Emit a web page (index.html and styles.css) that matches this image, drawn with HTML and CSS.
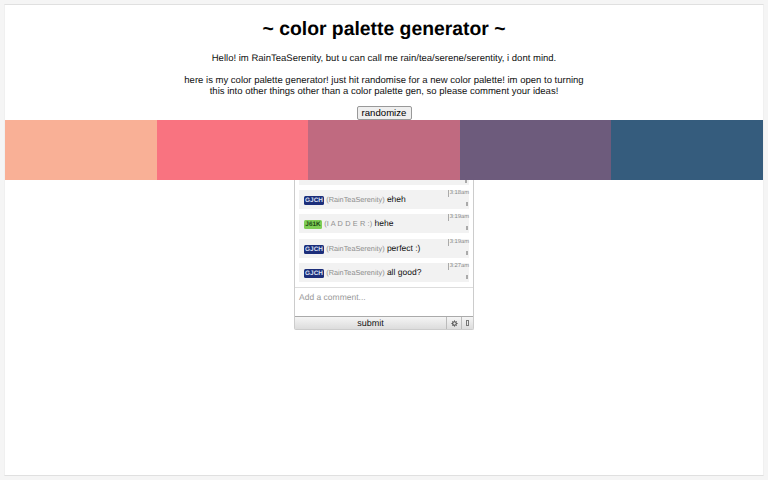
FILE: index.html
```html
<!DOCTYPE html>
<html lang="en">
<head>
<meta charset="utf-8">
<title>color palette generator</title>
<link rel="stylesheet" href="styles.css">
</head>
<body>
<main class="page">
  <header class="intro">
    <h1 class="title">~ color palette generator ~</h1>
    <p class="para first">Hello! im RainTeaSerenity, but u can call me rain/tea/serene/serentity, i dont mind.</p>
    <p class="para second">here is my color palette generator! just hit randomise for a new color palette! im open to turning<br>this into other things other than a color palette gen, so please comment your ideas!</p>
    <button class="randomize" type="button">randomize</button>
  </header>
  <section class="palette">
    <div class="swatch s1"></div>
    <div class="swatch s2"></div>
    <div class="swatch s3"></div>
    <div class="swatch s4"></div>
    <div class="swatch s5"></div>
  </section>
  <section class="chat">
    <div class="messages">
      <div class="peek"><span class="mark"></span></div>
      <div class="msg">
        <div class="body"><span class="badge blue">GJCH</span> <span class="name">(RainTeaSerenity)</span> <span class="text">eheh</span></div>
        <div class="meta"><span class="time">3:18am</span><span class="mark"></span></div>
      </div>
      <div class="msg">
        <div class="body"><span class="badge green">J61K</span> <span class="name spaced">(I A D D E R :)</span> <span class="text">hehe</span></div>
        <div class="meta"><span class="time">3:19am</span><span class="mark"></span></div>
      </div>
      <div class="msg">
        <div class="body"><span class="badge blue">GJCH</span> <span class="name">(RainTeaSerenity)</span> <span class="text">perfect :)</span></div>
        <div class="meta"><span class="time">3:19am</span><span class="mark"></span></div>
      </div>
      <div class="msg">
        <div class="body"><span class="badge blue">GJCH</span> <span class="name">(RainTeaSerenity)</span> <span class="text">all good?</span></div>
        <div class="meta"><span class="time">3:27am</span><span class="mark"></span></div>
      </div>
    </div>
    <div class="comment">Add a comment...</div>
    <div class="actions">
      <div class="submit">submit</div>
      <div class="iconbtn">
        <svg class="gear" viewBox="0 0 8 8" width="7" height="7" aria-hidden="true"><circle cx="4" cy="4" r="2.1" fill="none" stroke="#444" stroke-width="1.2"/><path d="M4 .4v1.2M4 6.4v1.2M.4 4h1.2M6.4 4h1.2M1.5 1.5l.8.8M5.7 5.7l.8.8M6.5 1.5l-.8.8M2.3 5.7l-.8.8" stroke="#444" stroke-width=".9"/></svg>
      </div>
      <div class="iconbtn narrow"><span class="tofu"></span></div>
    </div>
  </section>
</main>
</body>
</html>
```
FILE: styles.css
```css
* { box-sizing: border-box; }
html, body { margin: 0; height: 100%; }
body {
  background: #f5f5f5;
  padding: 4px;
  font-family: "Liberation Sans", Arial, sans-serif;
  color: #000;
  text-rendering: geometricPrecision;
}
.page {
  height: 472px;
  background: #fff;
  border: 1px solid #e0e0e0;
  border-left-color: #f0f0f0;
  border-right-color: #f0f0f0;
}
.intro { text-align: center; height: 115px; }
.title {
  margin: 0;
  padding-top: 13px;
  font-size: 19.35px;
  line-height: 22px;
  font-weight: 700;
}
.para { margin: 0; font-size: 9.53px; line-height: 11px; color: #111; }
.first { padding-top: 13px; }
.second { padding-top: 11px; }
.randomize {
  display: block;
  margin: 9px auto 0;
  width: 55px;
  height: 14px;
  padding: 0;
  font: 9.6px/12px "Liberation Sans", Arial, sans-serif;
  color: #000;
  background: #efefef;
  border: 1px solid #999;
  border-radius: 2px;
}
.palette { display: flex; height: 60px; }
.swatch { flex: 1; }
.s1 { background: #f9b096; }
.s2 { background: #f97380; }
.s3 { background: #c06a80; }
.s4 { background: #6d5b7c; }
.s5 { background: #355c7d; }
.chat {
  width: 180px;
  margin: 0 auto;
  height: 150px;
  border: 1px solid #ccc;
  border-top: 0;
  border-radius: 0 0 2px 2px;
  display: flex;
  flex-direction: column;
}
.messages {
  height: 108px;
  border-bottom: 1px solid #ddd;
  padding: 0 4px;
  overflow: hidden;
}
.peek {
  height: 5px;
  background: #f2f2f2;
  margin-bottom: 5px;
  display: flex;
  justify-content: flex-end;
  padding-right: 1px;
}
.peek .mark { margin-top: 0; height: 3px; }
.msg {
  height: 19px;
  margin-bottom: 5.3px;
  background: #f2f2f2;
  display: flex;
  justify-content: space-between;
}
.body { padding: 4px 0 0 5px; font-size: 8px; line-height: 10px; white-space: nowrap; }
.badge {
  display: inline-block;
  width: 20px;
  height: 9px;
  line-height: 9px;
  font-size: 6.4px;
  font-weight: 700;
  text-align: center;
  border-radius: 1.5px;
}
.blue { background: #1c2e7a; color: #dfe3f5; }
.green { background: #7fce55; color: #1f4a14; width: 18px; }
.name { color: #8d8d8d; font-size: 7.3px; }
.spaced { letter-spacing: 0.15px; }
.text { color: #111; font-size: 8.5px; }
.meta {
  width: 22px;
  display: flex;
  flex-direction: column;
  align-items: flex-end;
  font-size: 5.8px;
  line-height: 7px;
  color: #888;
}
.time { border-left: 1px solid #aaa; padding-left: 1px; }
.mark {
  display: block;
  width: 2px;
  height: 4px;
  margin: 5px 1px 0 0;
  border: 1px solid #aaa;
  border-width: 0 1px;
}
.comment {
  height: 28px;
  padding: 4px;
  font-size: 8.5px;
  line-height: 10px;
  color: #999;
}
.actions {
  height: 13px;
  display: flex;
  border-top: 1px solid #aaa;
  background: linear-gradient(#f5f5f5, #dcdcdc);
}
.submit {
  flex: 1;
  text-align: center;
  font-size: 9px;
  line-height: 12px;
  color: #111;
}
.iconbtn {
  width: 15px;
  border-left: 1px solid #bbb;
  display: flex;
  align-items: center;
  justify-content: center;
}
.narrow { width: 12px; }
.tofu { width: 3px; height: 6px; border: 1px solid #777; }
```
